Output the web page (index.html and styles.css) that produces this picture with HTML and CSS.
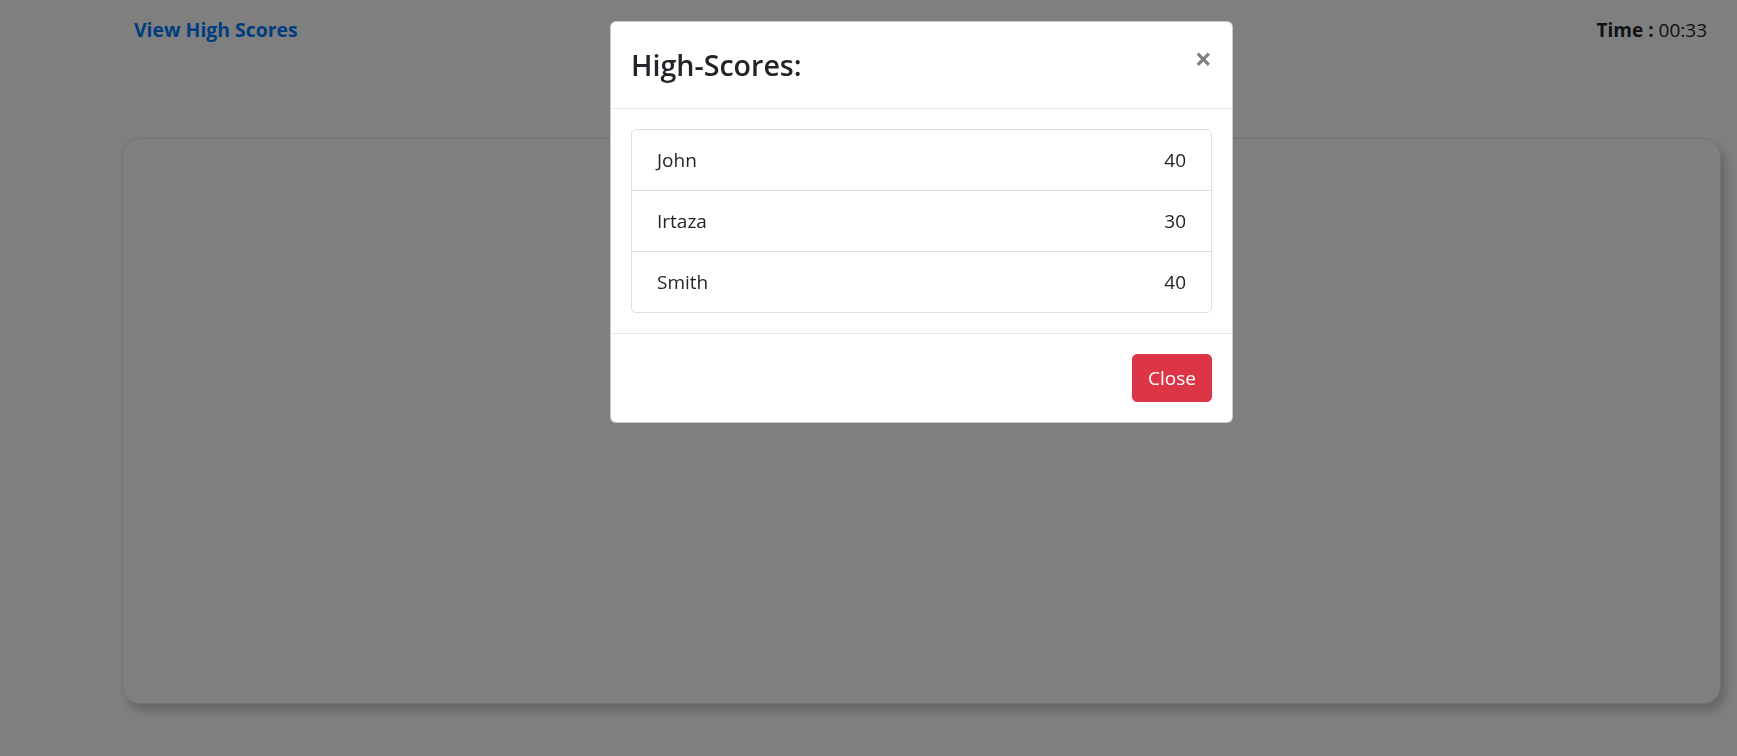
FILE: index.html
```html
<!DOCTYPE html>
<html lang="en">
<head>
<meta charset="utf-8">
<title>Quiz</title>
<link rel="stylesheet" href="styles.css">
</head>
<body>
<div class="page">
  <header class="topbar">
    <a class="scores-link" href="#">View High Scores</a>
    <div class="timer"><strong>Time :</strong> 00:33</div>
  </header>
  <main class="quiz-card"></main>
</div>

<div class="backdrop"></div>

<div class="modal">
  <div class="modal-dialog">
    <div class="modal-header">
      <h4 class="modal-title">High-Scores:</h4>
      <button class="close" type="button" aria-label="Close">&times;</button>
    </div>
    <div class="modal-body">
      <ul class="list-group">
        <li class="list-item"><span>John</span><span>40</span></li>
        <li class="list-item"><span>Irtaza</span><span>30</span></li>
        <li class="list-item"><span>Smith</span><span>40</span></li>
      </ul>
    </div>
    <div class="modal-footer">
      <button class="btn-close" type="button">Close</button>
    </div>
  </div>
</div>
</body>
</html>
```

FILE: styles.css
```css
* { box-sizing: border-box; }

html, body {
  margin: 0;
  padding: 0;
  height: 100%;
}

body {
  font-family: "Open Sans", "Noto Sans", sans-serif;
  font-size: 20px;
  line-height: 30px;
  color: #212529;
  background: #fff;
  overflow: hidden;
}

.page {
  padding: 15px 16px 0 122px;
}

.topbar {
  display: flex;
  justify-content: space-between;
  align-items: center;
  height: 30px;
  padding: 0 14px 0 12px;
}

.scores-link {
  color: #007bff;
  font-weight: 700;
  text-decoration: none;
  font-size: 19.4px;
}

.timer {
  font-size: 19px;
  color: #212529;
}

.timer strong { font-weight: 700; }

.quiz-card {
  margin-top: 93px;
  height: 566px;
  border: 1px solid rgba(0, 0, 0, 0.09);
  border-radius: 18px;
  background: #fff;
  box-shadow: 5px 7px 10px rgba(0, 0, 0, 0.2);
}

.backdrop {
  position: fixed;
  inset: 0;
  background: rgba(0, 0, 0, 0.5);
}

.modal {
  position: fixed;
  inset: 0;
}

.modal-dialog {
  width: 623px;
  margin: 21px 0 0 610px;
  background: #fff;
  border: 1px solid rgba(0, 0, 0, 0.2);
  border-radius: 6px;
  display: flex;
  flex-direction: column;
}

.modal-header {
  display: flex;
  align-items: flex-start;
  justify-content: space-between;
  padding: 20px;
  border-bottom: 1px solid #e5e7ea;
}

.modal-title {
  margin: 0;
  font-size: 28.6px;
  line-height: 46px;
  font-weight: 600;
  color: #212529;
}

.close {
  font-family: "Open Sans", "Noto Sans", sans-serif;
  background: transparent;
  border: 0;
  padding: 20px;
  margin: -18px -20px -20px auto;
  font-size: 30px;
  font-weight: 700;
  line-height: 1;
  color: #000;
  opacity: 0.5;
  text-shadow: 0 1px 0 #fff;
  cursor: pointer;
}

.modal-body {
  padding: 20px;
}

.list-group {
  list-style: none;
  margin: 0;
  padding: 0;
  border: 1px solid rgba(0, 0, 0, 0.125);
  border-radius: 5px;
}

.list-item {
  display: flex;
  justify-content: space-between;
  padding: 15px 25px;
  font-size: 19px;
  line-height: 30px;
  color: #212529;
}

.list-item + .list-item {
  border-top: 1px solid rgba(0, 0, 0, 0.125);
}

.modal-footer {
  display: flex;
  justify-content: flex-end;
  align-items: center;
  padding: 15px;
  border-top: 1px solid #e5e7ea;
}

.btn-close {
  font-family: "Open Sans", "Noto Sans", sans-serif;
  margin: 5px;
  padding: 8px 15px;
  font-size: 19px;
  line-height: 30px;
  color: #fff;
  background: #dc3545;
  border: 1px solid #dc3545;
  border-radius: 5px;
  cursor: pointer;
}
```
